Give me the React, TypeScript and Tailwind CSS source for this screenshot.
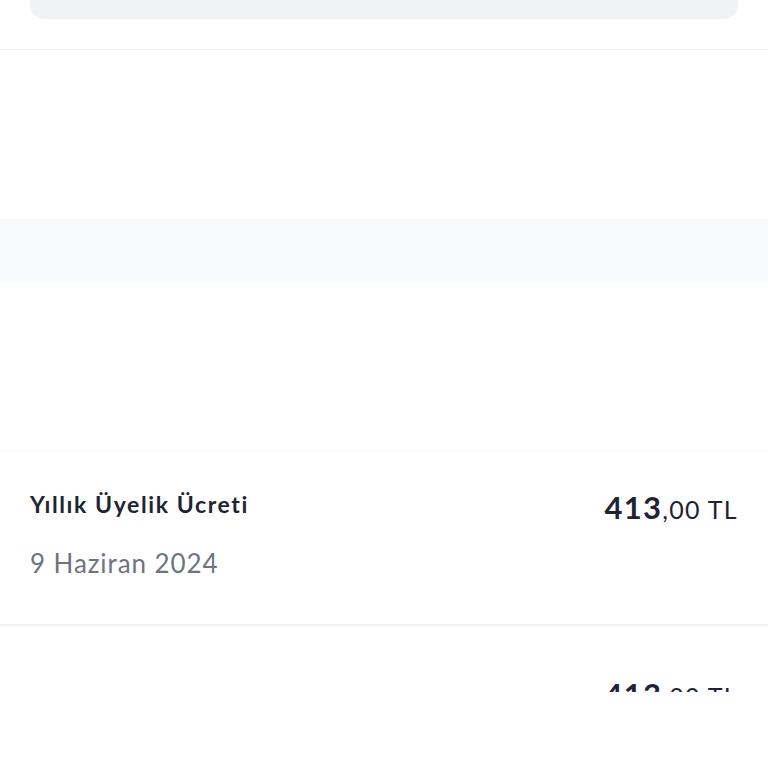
export default function App() {
  return (
    <div
      className="w-[768px] h-[768px] overflow-hidden bg-white"
      style={{ fontFamily: "Lato, 'Noto Sans', sans-serif" }}
    >
      {/* Search / filter bar (bottom edge) */}
      <div className="px-[30px]">
        <div className="h-[19px] rounded-b-[14px] bg-[#f1f2f5]" />
      </div>
      <div className="h-[31px] border-b border-[#f0f1f4]" />

      {/* Faded section */}
      <div className="h-[400px] flex flex-col">
        <div className="h-[169px]" />
        <div className="h-[62px] bg-[#f8f9fa]" />
      </div>

      {/* Payment row */}
      <div className="border-t border-[#f7f7f9] border-b-2 border-b-[#f1f2f4] px-[30px] h-[176px] flex justify-between items-start pt-[38px]">
        <div className="flex flex-col">
          <span className="text-[23px] font-bold text-[#1f2433] leading-[30px] tracking-[1.6px]">Yıllık Üyelik Ücreti</span>
          <span className="mt-[29px] text-[26px] text-[#6e7380] leading-[30px] tracking-[0.9px]">9 Haziran 2024</span>
        </div>
        <div className="flex items-baseline text-[#1f2335] mt-[0px] tracking-[1.3px]">
          <span className="text-[31px] font-bold leading-[36px]">413</span>
          <span className="text-[25px] leading-[36px]">,00 TL</span>
        </div>
      </div>

      {/* Next row, partly visible */}
      <div className="px-[30px] h-[66px] overflow-hidden flex justify-end">
        <div className="flex items-baseline text-[#1f2335] mt-[50px] tracking-[1.3px]">
          <span className="text-[31px] font-bold leading-[36px]">413</span>
          <span className="text-[25px] leading-[36px]">,00 TL</span>
        </div>
      </div>
    </div>
  );
}
